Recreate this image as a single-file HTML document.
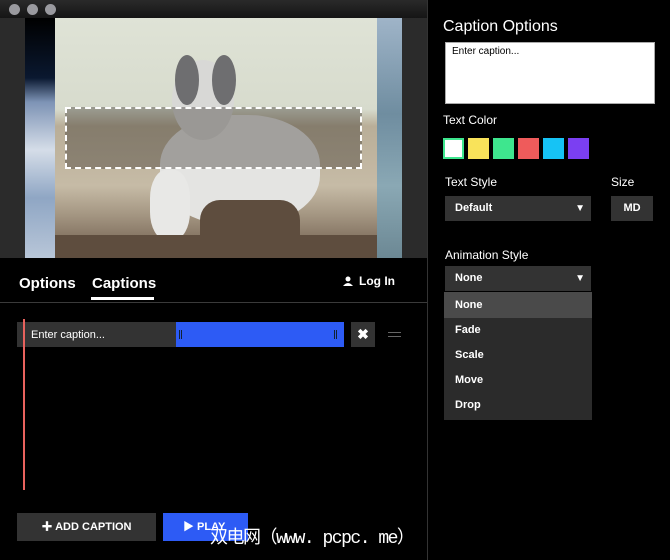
<!DOCTYPE html>
<html><head><style>
*{margin:0;padding:0;box-sizing:border-box}
body{width:670px;height:560px;background:#000;font-family:"Liberation Sans","Noto Sans CJK SC",sans-serif;color:#fff;position:relative;overflow:hidden}
.a{position:absolute}
.b{font-weight:bold}
</style></head><body>
<div class="a" style="left:0;top:0;width:428px;height:18px;background:linear-gradient(#2a2a2a,#151515)"></div>
<div class="a" style="left:9px;top:4px;width:11px;height:11px;border-radius:50%;background:#9a9a9f"></div>
<div class="a" style="left:27px;top:4px;width:11px;height:11px;border-radius:50%;background:#9a9a9f"></div>
<div class="a" style="left:45px;top:4px;width:11px;height:11px;border-radius:50%;background:#9a9a9f"></div>
<div class="a" style="left:0;top:18px;width:427px;height:240px;background:#2b2b2b"></div>
<div class="a" style="left:25px;top:18px;width:30px;height:240px;background:linear-gradient(#000 0%,#0a1830 25%,#7d93b5 35%,#d5dde8 55%,#8fa6c4 75%,#b8c6d8 100%)"></div>
<div class="a" style="left:377px;top:18px;width:25px;height:240px;background:linear-gradient(#9fb4c8,#6f8da0 40%,#8aa8b4 70%,#6c8894)"></div>
<div class="a" style="left:55px;top:18px;width:322px;height:240px;background:linear-gradient(#dfe3d6 0%,#d7dbcd 38%,#b9ae98 45%,#c6bba6 70%,#a49682 82%,#6a5848 100%)"></div>
<div class="a" style="left:160px;top:115px;width:160px;height:110px;border-radius:45%;background:#e4e4e2"></div>
<div class="a" style="left:150px;top:170px;width:40px;height:70px;border-radius:40%;background:#e8e8e6"></div>
<div class="a" style="left:172px;top:60px;width:62px;height:80px;border-radius:50%;background:#d8d8d6"></div>
<div class="a" style="left:175px;top:55px;width:24px;height:50px;border-radius:50%;background:#6e6e70"></div>
<div class="a" style="left:212px;top:55px;width:24px;height:50px;border-radius:50%;background:#6e6e70"></div>
<div class="a" style="left:200px;top:200px;width:100px;height:58px;background:#5e4d3e;border-radius:20px 20px 0 0"></div>
<div class="a" style="left:55px;top:235px;width:322px;height:23px;background:#5e4d3e"></div>
<div class="a" style="left:65px;top:107px;width:297px;height:62px;border:2px dashed #fff;background:rgba(40,35,30,0.35)"></div>
<div class="a" style="left:427px;top:0;width:1px;height:560px;background:#333"></div>
<div class="a b" style="left:19px;top:275px;font-size:15px">Options</div>
<div class="a b" style="left:92px;top:275px;font-size:15px">Captions</div>
<div class="a" style="left:91px;top:297px;width:63px;height:3px;background:#fff"></div>
<svg class="a" style="left:343px;top:276px" width="10" height="10" viewBox="0 0 10 10"><circle cx="5" cy="3" r="2.5" fill="#fff"/><path d="M0 10 Q5 4 10 10Z" fill="#fff"/></svg>
<div class="a b" style="left:359px;top:274px;font-size:12px">Log In</div>
<div class="a" style="left:0;top:302px;width:427px;height:1px;background:#3a3a3a"></div>
<div class="a" style="left:17px;top:322px;width:159px;height:25px;background:#333;font-size:11px;line-height:27px;padding-left:14px">Enter caption...</div>
<div class="a" style="left:176px;top:322px;width:168px;height:25px;background:#2d5bf5"></div>
<div class="a" style="left:179px;top:330px;width:3px;height:9px;border-left:1px solid #123;border-right:1px solid #123"></div>
<div class="a" style="left:334px;top:330px;width:3px;height:9px;border-left:1px solid #123;border-right:1px solid #123"></div>
<div class="a b" style="left:351px;top:322px;width:24px;height:25px;background:#333;text-align:center;line-height:25px;font-size:14px">✖</div>
<div class="a" style="left:388px;top:332px;width:13px;height:5px;border-top:1px solid #666;border-bottom:1px solid #666"></div>
<div class="a" style="left:23px;top:319px;width:2px;height:171px;background:#e8625d"></div>
<div class="a b" style="left:17px;top:513px;width:139px;height:28px;background:#333;font-size:11px;line-height:28px;text-align:center">✚ ADD CAPTION</div>
<div class="a b" style="left:163px;top:513px;width:85px;height:28px;background:#2d5bf5;font-size:11px;line-height:28px;padding-left:20px">▶ PLAY</div>
<div class="a" style="left:210px;top:523px;font-size:18px;color:#fff;white-space:nowrap;font-family:'Liberation Mono','Noto Sans CJK SC',monospace;letter-spacing:-1.5px">双电网（www. pcpc. me）</div>
<div class="a" style="left:443px;top:18px;font-size:16px">Caption Options</div>
<div class="a" style="left:445px;top:42px;width:210px;height:62px;background:#fff;border:1px solid #aaa;color:#000;font-size:10px;padding:3px 6px">Enter caption...</div>
<div class="a" style="left:443px;top:113px;font-size:12px">Text Color</div>
<div class="a" style="left:443px;top:138px;width:21px;height:21px;background:#fff;border:2px solid #3ee68e"></div>
<div class="a" style="left:468px;top:138px;width:21px;height:21px;background:#f9e35a"></div>
<div class="a" style="left:493px;top:138px;width:21px;height:21px;background:#3ee68e"></div>
<div class="a" style="left:518px;top:138px;width:21px;height:21px;background:#ef5b5b"></div>
<div class="a" style="left:543px;top:138px;width:21px;height:21px;background:#16c3f5"></div>
<div class="a" style="left:568px;top:138px;width:21px;height:21px;background:#7b3ff2"></div>
<div class="a" style="left:445px;top:175px;font-size:12px">Text Style</div>
<div class="a" style="left:611px;top:175px;font-size:12px">Size</div>
<div class="a b" style="left:445px;top:196px;width:146px;height:25px;background:#333;font-size:11px;line-height:25px;padding-left:10px">Default<span style="position:absolute;right:6px;font-size:10px">▼</span></div>
<div class="a b" style="left:611px;top:196px;width:42px;height:25px;background:#333;font-size:11px;line-height:25px;text-align:center">MD</div>
<div class="a" style="left:445px;top:248px;font-size:12px">Animation Style</div>
<div class="a b" style="left:445px;top:266px;width:146px;height:25px;background:#333;font-size:11px;line-height:25px;padding-left:10px">None<span style="position:absolute;right:6px;font-size:10px">▼</span></div>
<div class="a b" style="left:444px;top:292px;width:148px;height:128px;background:#2b2b2b;font-size:11px">
<div style="height:26px;line-height:26px;background:#4a4a4a;padding-left:11px">None</div>
<div style="height:25px;line-height:25px;padding-left:11px">Fade</div>
<div style="height:25px;line-height:25px;padding-left:11px">Scale</div>
<div style="height:25px;line-height:25px;padding-left:11px">Move</div>
<div style="height:25px;line-height:25px;padding-left:11px">Drop</div>
</div>
</body></html>
